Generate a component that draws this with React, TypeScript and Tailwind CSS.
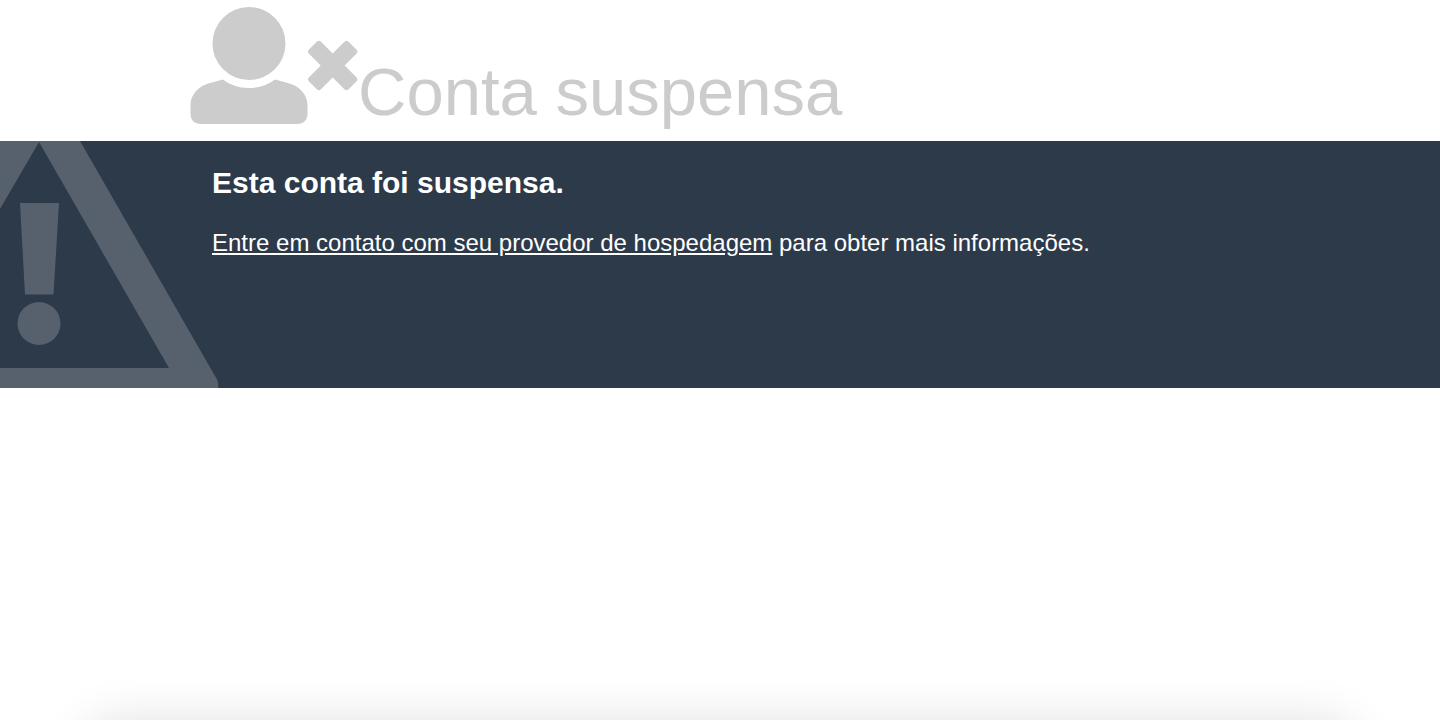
import React from 'react';

const UserTimesIcon = () => (
    <svg viewBox="0 0 168 118" className="w-[168px] h-[118px] shrink-0" fill="currentColor" aria-hidden="true">
        <circle cx="59" cy="36.500" r="36.500" />
        <path d="M33 72.500C40 78 49 81 59 81S78 78 85 72.500L98 76C110 79 117.500 88 117.500 98V106Q117.500 117 106.500 117H11.500Q0.500 117 0.500 106V98C0.500 88 8 79 20 76Z" />
        <g transform="translate(142.700 58.500)">
            <rect x="-28" y="-8.500" width="56" height="17" rx="3" transform="rotate(45)" />
            <rect x="-28" y="-8.500" width="56" height="17" rx="3" transform="rotate(-45)" />
        </g>
    </svg>
);

const WarningIcon = () => (
    <svg viewBox="0 0 219 247" className="absolute left-0 top-0 w-[219px] h-[247px]" fill="currentColor" aria-hidden="true">
        <path fillRule="evenodd" d="M0 0H80L215 235Q219 240 218 247H0V227H169L39 1L0 68Z" />
        <path d="M20 62H59L53.500 153.500H25Z" />
        <circle cx="39" cy="182.500" r="21.500" />
    </svg>
);

export default function App() {
    return (
        <div className="min-h-screen flex flex-col bg-white font-['Liberation_Sans',Arial,sans-serif]">
            {/* Header */}
            <header className="w-full max-w-[1060px] mx-auto pt-[7px] pb-4 flex items-end text-[#cccccc]">
                <UserTimesIcon />
                <h1 className="text-[67px] leading-[66px]">Conta suspensa</h1>
            </header>

            {/* Message */}
            <section className="relative bg-[#2d3a4a] text-white min-h-[247px]">
                <div className="text-[#57616d]">
                    <WarningIcon />
                </div>
                <div className="relative max-w-[1060px] mx-auto px-[22px] pt-6">
                    <h2 className="text-[30px] leading-9 font-bold">Esta conta foi suspensa.</h2>
                    <p className="mt-6 text-2xl leading-9">
                        <a href="#contato" className="underline">Entre em contato com seu provedor de hospedagem</a>{' '}
                        para obter mais informações.
                    </p>
                </div>
            </section>

            {/* Bottom shadow */}
            <div className="flex-1 flex flex-col justify-end overflow-hidden">
                <div className="h-40 -mb-40 mx-20 rounded-[40px] shadow-[0_0_48px_rgba(0,0,0,0.12)]" />
            </div>
        </div>
    );
}
